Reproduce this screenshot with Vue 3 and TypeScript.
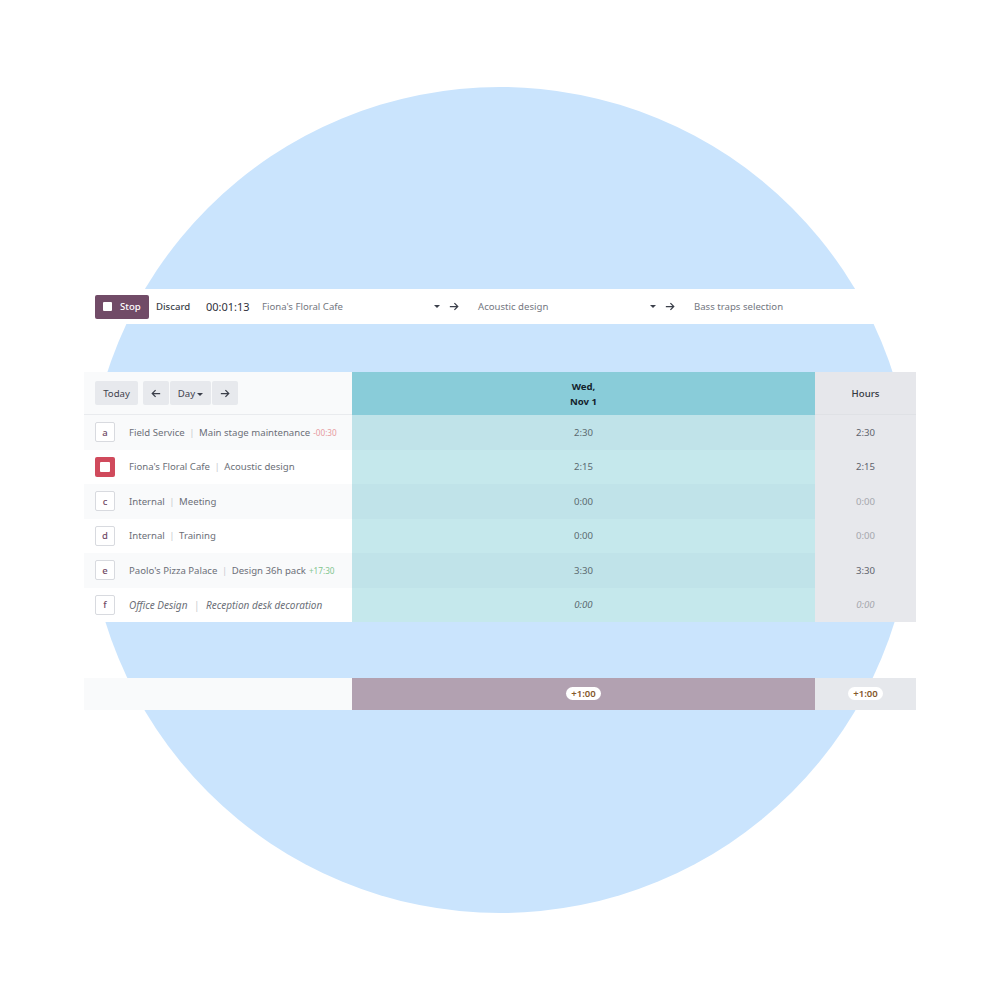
<template>
  <div class="page">
    <div class="circle"></div>

    <main class="panel">
      <!-- timer bar -->
      <div class="timer-bar">
        <button class="btn-stop"><span class="stop-square"></span>Stop</button>
        <span class="discard">Discard</span>
        <span class="clock">00:01:13</span>
        <div class="timer-field project">
          <span>Fiona's Floral Cafe</span>
          <i class="caret"></i>
          <svg class="arrow" viewBox="0 0 12 10"><path d="M1 5h9.5M6.5 1l4 4-4 4" /></svg>
        </div>
        <div class="timer-field task">
          <span>Acoustic design</span>
          <i class="caret"></i>
          <svg class="arrow" viewBox="0 0 12 10"><path d="M1 5h9.5M6.5 1l4 4-4 4" /></svg>
        </div>
        <span class="timer-desc">Bass traps selection</span>
      </div>

      <!-- grid -->
      <div class="grid">
        <div class="head-left">
          <button class="btn-gray today">Today</button>
          <div class="btn-group">
            <button class="btn-gray icon-btn">
              <svg class="arrow" viewBox="0 0 12 10"><path d="M11 5H1.5M5.5 1l-4 4 4 4" /></svg>
            </button>
            <button class="btn-gray day">Day<i class="caret small"></i></button>
            <button class="btn-gray icon-btn">
              <svg class="arrow" viewBox="0 0 12 10"><path d="M1 5h9.5M6.5 1l4 4-4 4" /></svg>
            </button>
          </div>
        </div>
        <div class="head-day">Wed,<br />Nov 1</div>
        <div class="head-hours">Hours</div>

        <template v-for="(row, i) in rows" :key="row.key">
          <div class="cell-name" :class="{ odd: i % 2 === 0, ghost: row.ghost }">
            <span v-if="!row.active" class="key">{{ row.key }}</span>
            <span v-else class="key active"><span></span></span>
            <span class="name">{{ row.project }}</span>
            <span class="sep">|</span>
            <span class="name">{{ row.task }}</span>
            <span v-if="row.extra" class="extra" :class="row.extra[0] === '-' ? 'neg' : 'pos'">{{ row.extra }}</span>
          </div>
          <div class="cell-day" :class="{ odd: i % 2 === 0, ghost: row.ghost }">{{ row.day }}</div>
          <div class="cell-total" :class="{ muted: row.total === '0:00', ghost: row.ghost }">{{ row.total }}</div>
        </template>
      </div>

      <!-- footer totals -->
      <div class="footer grid-cols">
        <div class="foot-left"></div>
        <div class="foot-day"><span class="pill">+1:00</span></div>
        <div class="foot-hours"><span class="pill">+1:00</span></div>
      </div>
    </main>
  </div>
</template>

<script setup lang="ts">
interface Row {
  key: string
  project: string
  task: string
  day: string
  total: string
  extra?: string
  active?: boolean
  ghost?: boolean
}

const rows: Row[] = [
  { key: 'a', project: 'Field Service', task: 'Main stage maintenance', day: '2:30', total: '2:30', extra: '-00:30' },
  { key: 'b', project: "Fiona's Floral Cafe", task: 'Acoustic design', day: '2:15', total: '2:15', active: true },
  { key: 'c', project: 'Internal', task: 'Meeting', day: '0:00', total: '0:00' },
  { key: 'd', project: 'Internal', task: 'Training', day: '0:00', total: '0:00' },
  { key: 'e', project: "Paolo's Pizza Palace", task: 'Design 36h pack', day: '3:30', total: '3:30', extra: '+17:30' },
  { key: 'f', project: 'Office Design', task: 'Reception desk decoration', day: '0:00', total: '0:00', ghost: true },
]
</script>

<style>
html,
body {
  margin: 0;
  background: #fff;
}
</style>

<style scoped>
.page {
  position: relative;
  width: 1000px;
  height: 1000px;
  overflow: hidden;
  background: #fff;
  font-family: "Noto Sans", "Open Sans", sans-serif;
  font-size: 9.6px;
  color: #4b4f5a;
}

/* backdrop, sits under everything */
.circle {
  position: absolute;
  left: 87px;
  top: 87px;
  width: 826px;
  height: 826px;
  border-radius: 50%;
  background: #cae4fd;
}

.panel {
  position: relative;
  width: 832px;
  margin-left: 84px;
  padding-top: 289px;
}

button {
  border: 0;
  padding: 0;
  font: inherit;
}

/* timer bar */
.timer-bar {
  display: flex;
  align-items: center;
  height: 35px;
  padding-left: 11px;
  background: #fff;
}

.btn-stop {
  display: flex;
  align-items: center;
  width: 54px;
  height: 24px;
  padding-left: 8px;
  box-sizing: border-box;
  gap: 8px;
  border-radius: 2px;
  background: #714b67;
  color: #fff;
  font-weight: 500;
}

.stop-square {
  width: 9px;
  height: 9px;
  background: #fff;
  border-radius: 1px;
}

.discard {
  width: 50px;
  margin-left: 7px;
  font-weight: 500;
  color: #3b3f4a;
}

.clock {
  width: 56px;
  font-size: 11px;
  color: #2f323b;
}

.timer-field {
  display: flex;
  align-items: center;
  width: 216px;
  color: #74777f;
}

.timer-field span {
  flex: 1;
}

.caret {
  display: inline-block;
  width: 0;
  height: 0;
  border-left: 3px solid transparent;
  border-right: 3px solid transparent;
  border-top: 3px solid #3b3f4a;
}

.caret.small {
  margin-left: 2px;
  margin-bottom: 1px;
}

.arrow {
  width: 10px;
  height: 9px;
  fill: none;
  stroke: #3b3f4a;
  stroke-width: 1.5;
}

.timer-field .arrow {
  margin: 0 19px 1px 9px;
}

.timer-desc {
  color: #74777f;
}

/* grid */
.grid,
.grid-cols {
  display: grid;
  grid-template-columns: 268px 463px 101px;
}

.grid {
  margin-top: 48px;
  grid-template-rows: 43px repeat(6, 34.5px);
}

.head-left {
  display: flex;
  align-items: center;
  gap: 5px;
  padding-left: 11px;
  background: #f9fafb;
  border-bottom: 1px solid #e9ebee;
}

.btn-gray {
  height: 24px;
  background: #e7e9ed;
  color: #3f434e;
  border-radius: 2px;
}

.today {
  width: 43px;
}

.btn-group {
  display: flex;
  gap: 1px;
}

.icon-btn {
  display: flex;
  align-items: center;
  justify-content: center;
  width: 26px;
}

.day {
  width: 41px;
}

.head-day {
  display: flex;
  align-items: center;
  justify-content: center;
  text-align: center;
  line-height: 15px;
  font-weight: 700;
  background: #89ccd9;
  color: #14232c;
}

.head-hours {
  display: flex;
  align-items: center;
  justify-content: center;
  font-weight: 500;
  background: #e6e7eb;
  color: #333740;
  border-bottom: 1px solid #dfe1e5;
}

.cell-name {
  display: flex;
  align-items: center;
  padding-left: 11px;
  background: #fff;
  color: #6c6f78;
}

.cell-name.odd {
  background: #f9fafb;
}

.cell-name.ghost {
  font-style: italic;
  font-size: 10px;
}

.cell-name.ghost .sep {
  margin: 0 6.5px;
}

.key {
  display: flex;
  align-items: center;
  justify-content: center;
  width: 18px;
  height: 18px;
  margin-right: 14px;
  border: 1px solid #d8dadf;
  border-radius: 2px;
  background: #fff;
  color: #714b67;
  font-size: 9.5px;
  font-weight: 500;
  font-style: normal;
}

.key.active {
  width: 20px;
  height: 20px;
  border: 0;
  background: #d04a5c;
}

.key.active span {
  width: 10px;
  height: 10px;
  border-radius: 1px;
  background: #fff;
}

.sep {
  margin: 0 4.5px;
  color: #c9cbd0;
  font-style: normal;
}

.extra {
  margin-left: 3px;
  font-size: 8.2px;
}

.extra.neg {
  color: #e79a9f;
}

.extra.pos {
  color: #83c58f;
}

.cell-day {
  display: flex;
  align-items: center;
  justify-content: center;
  background: #c5e8ec;
  color: #5b6a70;
}

.cell-day.odd {
  background: #c0e3e9;
}

.cell-day.ghost,
.cell-total.ghost {
  font-style: italic;
}

.cell-total {
  display: flex;
  align-items: center;
  justify-content: center;
  background: #e7e8ec;
  color: #60636c;
}

.cell-total.muted {
  color: #a5a7ad;
}

/* footer */
.footer {
  height: 32px;
  margin-top: 56px;
}

.foot-left {
  background: #f9fafb;
}

.foot-day,
.foot-hours {
  display: flex;
  align-items: center;
  justify-content: center;
}

.foot-day {
  background: #b2a1b1;
}

.foot-hours {
  background: #e6e8ec;
}

.pill {
  padding: 0 5.5px;
  height: 13px;
  line-height: 13px;
  border-radius: 7px;
  background: #fff;
  color: #85582c;
  font-size: 9.6px;
  font-weight: 600;
  margin-bottom: 2px;
}
</style>
